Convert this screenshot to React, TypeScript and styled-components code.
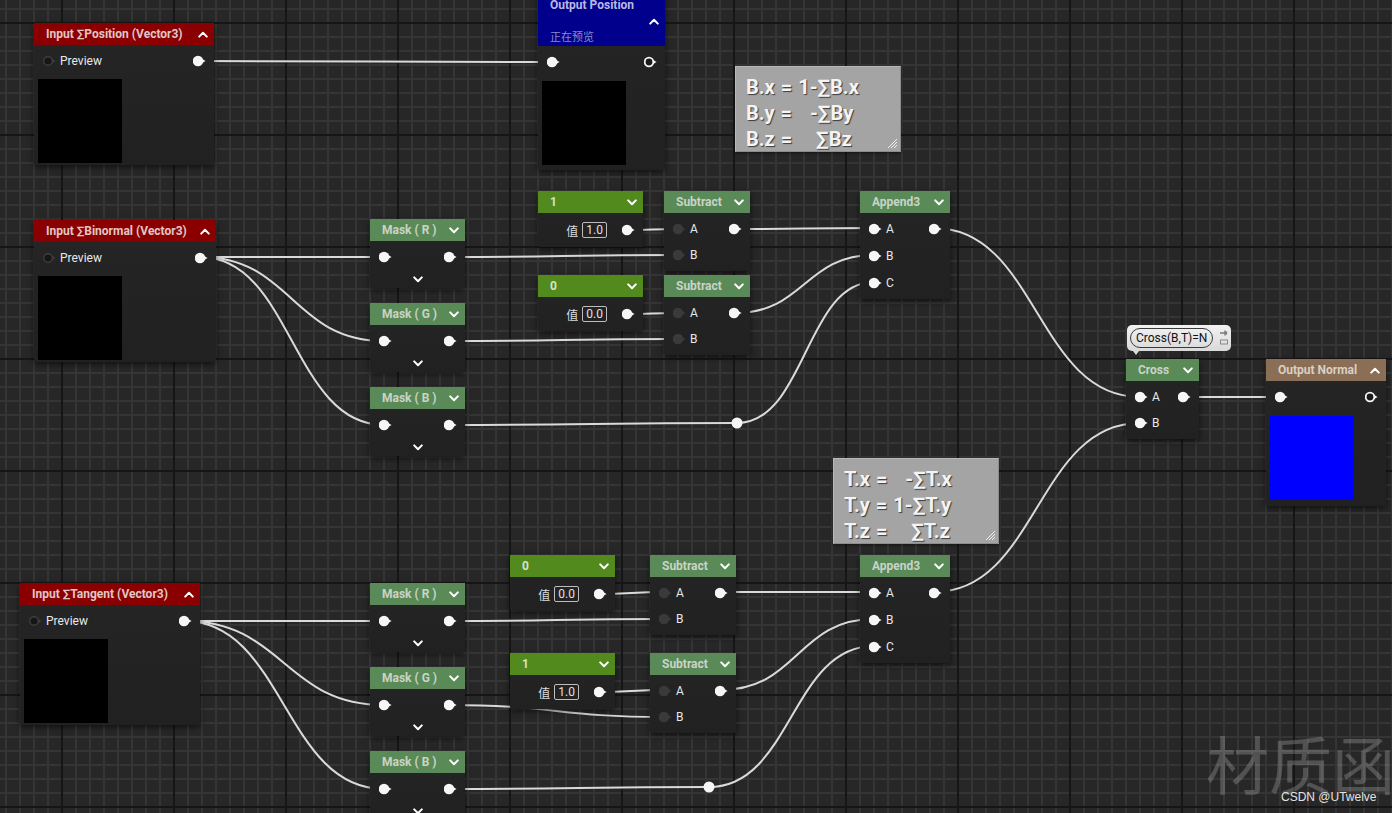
import styled, { createGlobalStyle } from "styled-components";

const colors = {
  canvas: "#272727",
  gridMinor: "#353535",
  gridMajor: "#161616",
  body: "#232323",
  wire: "#dadada",
  pinOn: "#f6f6f6",
  pinOff: "#3a3a3a",
  red: "#8a0000",
  green: "#5a8a57",
  constGreen: "#528a1e",
  blue: "#00008c",
  brown: "#8a6e55",
  comment: "#a4a4a4",
};

const GlobalStyle = createGlobalStyle`
  html, body {
    margin: 0;
    padding: 0;
    background: ${colors.canvas};
    overflow: hidden;
  }
  body {
    font-family: Roboto, "Noto Sans", "Noto Sans CJK SC", sans-serif;
  }
`;

const Canvas = styled.div`
  position: relative;
  width: 1392px;
  height: 813px;
  overflow: hidden;
  background-color: ${colors.canvas};
  background-image:
    linear-gradient(90deg, ${colors.gridMajor} 2px, transparent 2px),
    linear-gradient(180deg, ${colors.gridMajor} 2px, transparent 2px),
    linear-gradient(90deg, ${colors.gridMinor} 2px, transparent 2px),
    linear-gradient(180deg, ${colors.gridMinor} 2px, transparent 2px);
  background-size: 112px 112px, 112px 112px, 14px 14px, 14px 14px;
  background-position: 61px 0, 0 22px, 5px 0, 0 8px;
`;

const WireLayer = styled.svg`
  position: absolute;
  left: 0;
  top: 0;
  width: 1392px;
  height: 813px;
  pointer-events: none;
`;

type Pos = { $x: number; $y: number; $w: number };

const NodeBox = styled.div.attrs<Pos>((p) => ({
  style: { left: p.$x, top: p.$y, width: p.$w },
}))<Pos>`
  position: absolute;
  background: linear-gradient(180deg, #252525 0%, #212121 100%);
  box-shadow: 0 2px 6px rgba(0, 0, 0, 0.6);
  border-radius: 2px;
  font-size: 12px;
  color: #e6e6e6;
`;

const Header = styled.div<{ $bg: string; $fg: string }>`
  height: 22px;
  display: flex;
  align-items: center;
  justify-content: space-between;
  padding: 0 6px 0 12px;
  background: ${(p) => p.$bg};
  color: ${(p) => p.$fg};
  font-size: 12px;
  font-weight: 700;
  white-space: nowrap;
`;

const TallHeader = styled.div`
  height: 52px;
  display: flex;
  flex-direction: column;
  padding: 0 6px 0 12px;
  background: ${colors.blue};
  color: #b9b9e2;
  font-size: 12px;
  font-weight: 700;

  .title {
    height: 22px;
    line-height: 22px;
  }
  .chev {
    height: 10px;
    display: flex;
    justify-content: flex-end;
    align-items: center;
  }
  .sub {
    height: 20px;
    line-height: 20px;
    font-size: 11px;
    font-weight: 400;
    color: #8b8bc4;
    font-family: "Noto Sans CJK SC", sans-serif;
  }
`;

const Body = styled.div<{ $pt?: number; $pb?: number }>`
  padding-top: ${(p) => p.$pt ?? 3}px;
  padding-bottom: ${(p) => p.$pb ?? 3}px;
`;

const PinRow = styled.div<{ $h?: number }>`
  height: ${(p) => p.$h ?? 26}px;
  display: flex;
  align-items: center;
  gap: 3px;
  padding: 0 7px 0 9px;
  font-size: 12px;
  color: #e8e8e8;
`;

const Spacer = styled.div`
  flex: 1;
`;

const Expander = styled.div`
  height: 18px;
  display: flex;
  justify-content: center;
  align-items: center;
`;

const Preview = styled.div<{ $color: string }>`
  width: 84px;
  height: 84px;
  margin: 6px 0 0 4px;
  background: ${(p) => p.$color};
`;

const ValueLabel = styled.span`
  font-family: "Noto Sans CJK SC", sans-serif;
  font-size: 12px;
  color: #dcdcdc;
  margin-right: 1px;
`;

const ValueBox = styled.span`
  height: 16px;
  line-height: 15px;
  padding: 0 3px;
  border: 1px solid #bdbdbd;
  border-radius: 2px;
  box-sizing: border-box;
  font-size: 12px;
  color: #e0e0e0;
  margin-right: 12px;
`;

const PinSvg = styled.svg`
  flex: none;
  display: block;
`;

type PinKind = "on" | "off" | "ring" | "dark";

const Pin = ({ kind = "on" }: { kind?: PinKind }) => {
  const fill =
    kind === "on" ? colors.pinOn : kind === "off" ? colors.pinOff : kind === "ring" ? "#1a1a1a" : "#161616";
  const stroke = kind === "ring" ? colors.pinOn : kind === "dark" ? "#3e3e3e" : "none";
  const nub = kind === "on" ? colors.pinOn : kind === "off" ? colors.pinOff : kind === "ring" ? colors.pinOn : "#3e3e3e";
  const r = kind === "ring" || kind === "dark" ? 4.3 : 5.3;
  return (
    <PinSvg width="14" height="12" viewBox="0 0 14 12">
      <path d="M8.5 3.4 L12.5 6 L8.5 8.6 Z" fill={nub} />
      <circle cx="5" cy="6" r={r} fill={fill} stroke={stroke} strokeWidth={kind === "ring" ? 1.8 : 1.4} />
    </PinSvg>
  );
};

const Chevron = ({ up = false }: { up?: boolean }) => (
  <svg width="10" height="7" viewBox="0 0 10 7">
    <polyline
      points={up ? "1.2,5.6 5,1.8 8.8,5.6" : "1.2,1.4 5,5.2 8.8,1.4"}
      fill="none"
      stroke="#ffffff"
      strokeWidth="2"
      strokeLinecap="round"
      strokeLinejoin="round"
    />
  </svg>
);

const InputNode = ({ x, y, w, title }: { x: number; y: number; w: number; title: string }) => (
  <NodeBox $x={x} $y={y} $w={w}>
    <Header $bg={colors.red} $fg="#e2c6c6">
      <span>{title}</span>
      <Chevron up />
    </Header>
    <Body $pt={4} $pb={2}>
      <PinRow $h={24}>
        <Pin kind="dark" />
        <span>Preview</span>
        <Spacer />
        <Pin />
      </PinRow>
      <Preview $color="#000" />
    </Body>
  </NodeBox>
);

const OutputPositionNode = ({ x, y, w }: { x: number; y: number; w: number }) => (
  <NodeBox $x={x} $y={y} $w={w}>
    <TallHeader>
      <div className="title">Output Position</div>
      <div className="chev">
        <Chevron up />
      </div>
      <div className="sub">正在预览</div>
    </TallHeader>
    <Body $pb={5}>
      <PinRow>
        <Pin />
        <Spacer />
        <Pin kind="ring" />
      </PinRow>
      <Preview $color="#000" />
    </Body>
  </NodeBox>
);

const OutputNormalNode = ({ x, y, w }: { x: number; y: number; w: number }) => (
  <NodeBox $x={x} $y={y} $w={w}>
    <Header $bg={colors.brown} $fg="#dccfc2">
      <span>Output Normal</span>
      <Chevron up />
    </Header>
    <Body $pb={6}>
      <PinRow>
        <Pin />
        <Spacer />
        <Pin kind="ring" />
      </PinRow>
      <Preview $color="#0000ff" />
    </Body>
  </NodeBox>
);

const MaskNode = ({ x, y, channel }: { x: number; y: number; channel: string }) => (
  <NodeBox $x={x} $y={y} $w={95}>
    <Header $bg={colors.green} $fg="#c9d4c7">
      <span>Mask ( {channel} )</span>
      <Chevron />
    </Header>
    <Body $pt={3} $pb={0}>
      <PinRow>
        <Pin />
        <Spacer />
        <Pin />
      </PinRow>
      <Expander>
        <Chevron />
      </Expander>
    </Body>
  </NodeBox>
);

type MathProps = {
  x: number;
  y: number;
  w: number;
  title: string;
  inputs: string[];
  pin: PinKind;
  rowH?: number;
};

const MathNode = ({ x, y, w, title, inputs, pin, rowH = 26 }: MathProps) => (
  <NodeBox $x={x} $y={y} $w={w}>
    <Header $bg={colors.green} $fg="#c9d4c7">
      <span>{title}</span>
      <Chevron />
    </Header>
    <Body $pt={rowH === 27 ? 2 : 3} $pb={3}>
      {inputs.map((name, i) => (
        <PinRow key={name} $h={rowH}>
          <Pin kind={pin} />
          <span>{name}</span>
          <Spacer />
          {i === 0 && <Pin />}
        </PinRow>
      ))}
    </Body>
  </NodeBox>
);

const ConstNode = ({ x, y, title, value }: { x: number; y: number; title: string; value: string }) => (
  <NodeBox $x={x} $y={y} $w={105}>
    <Header $bg={colors.constGreen} $fg="#d6e2cc">
      <span>{title}</span>
      <Chevron />
    </Header>
    <Body $pt={4} $pb={4}>
      <PinRow>
        <Spacer />
        <ValueLabel>值</ValueLabel>
        <ValueBox>{value}</ValueBox>
        <Pin />
      </PinRow>
    </Body>
  </NodeBox>
);

const CommentBox = styled.div.attrs<{ $x: number; $y: number }>((p) => ({
  style: { left: p.$x, top: p.$y },
}))<{ $x: number; $y: number }>`
  position: absolute;
  width: 166px;
  height: 86px;
  box-sizing: border-box;
  padding: 7px 10px 0;
  background: ${colors.comment};
  border: 1px solid #b8b8b8;
  border-right-color: #8c8c8c;
  border-bottom-color: #8c8c8c;
  box-shadow: 0 1px 3px rgba(0, 0, 0, 0.5);
  font-family: Roboto, "DejaVu Sans", sans-serif;
  font-size: 20px;
  font-weight: 700;
  line-height: 26px;
  word-spacing: 1px;
  color: #f4f4f4;
  text-shadow: 1px 1px 1px #3c3c3c;
  white-space: pre;
`;

const Hatch = styled.svg`
  position: absolute;
  right: 2px;
  bottom: 2px;
`;

const Comment = ({ x, y, lines }: { x: number; y: number; lines: string[] }) => (
  <CommentBox $x={x} $y={y}>
    {lines.map((l) => (
      <div key={l}>{l}</div>
    ))}
    <Hatch width="11" height="11" viewBox="0 0 11 11">
      <path d="M1 10 L10 1 M4 10 L10 4 M7 10 L10 7" stroke="#f0f0f0" strokeWidth="1" />
    </Hatch>
  </CommentBox>
);

const Bubble = styled.div`
  position: absolute;
  left: 1127px;
  top: 325px;
  width: 104px;
  height: 26px;
  box-sizing: border-box;
  padding: 0 3px;
  display: flex;
  align-items: center;
  justify-content: space-between;
  background: linear-gradient(180deg, #f2f2f2, #d9d9d9);
  border-radius: 5px;

  &::after {
    content: "";
    position: absolute;
    left: 6px;
    bottom: -4px;
    border-left: 3px solid transparent;
    border-right: 3px solid transparent;
    border-top: 4px solid #dcdcdc;
  }
`;

const BubblePill = styled.span`
  height: 20px;
  line-height: 18px;
  box-sizing: border-box;
  padding: 0 5px;
  border: 1px solid #3a3a3a;
  border-radius: 10px;
  font-size: 12px;
  color: #111;
`;

const Watermark = styled.div`
  position: absolute;
  left: 1206px;
  top: 730px;
  font-family: "Noto Sans CJK SC", sans-serif;
  font-size: 63px;
  line-height: 63px;
  color: rgba(255, 255, 255, 0.2);
  white-space: nowrap;
`;

const Credit = styled.div`
  position: absolute;
  left: 1281px;
  top: 790px;
  font-family: "Liberation Sans", Arial, sans-serif;
  font-size: 12px;
  color: #e4e4e4;
  white-space: nowrap;
`;

const wires: [number, number, number, number][] = [
  [198, 61, 552, 62],
  [200, 257, 384, 257],
  [200, 257, 384, 341],
  [200, 257, 384, 425],
  [448, 257, 678, 255],
  [448, 341, 678, 339],
  [448, 425, 737, 423],
  [737, 423, 874, 282],
  [626, 230, 678, 229],
  [626, 314, 678, 313],
  [735, 229, 874, 228],
  [735, 313, 874, 255],
  [934, 228, 1140, 397],
  [1182, 397, 1280, 397],
  [934, 592, 1140, 423],
  [184, 621, 384, 621],
  [184, 621, 384, 705],
  [184, 621, 384, 789],
  [448, 621, 665, 619],
  [448, 705, 665, 717],
  [448, 789, 709, 787],
  [709, 787, 874, 646],
  [598, 594, 665, 592],
  [598, 692, 665, 690],
  [721, 592, 874, 592],
  [721, 690, 874, 619],
];

const knots: [number, number][] = [
  [737, 423],
  [709, 787],
];

const wirePath = ([x1, y1, x2, y2]: [number, number, number, number]) => {
  const c = Math.max(Math.abs(x2 - x1) * 0.5, 20);
  return `M${x1} ${y1} C${x1 + c} ${y1}, ${x2 - c} ${y2}, ${x2} ${y2}`;
};

const App = () => {
  return (
    <>
      <GlobalStyle />
      <Canvas>
        <WireLayer viewBox="0 0 1392 813">
          {wires.map((w, i) => (
            <path key={i} d={wirePath(w)} fill="none" stroke={colors.wire} strokeWidth="2" />
          ))}
          {knots.map(([x, y], i) => (
            <circle key={i} cx={x} cy={y} r="5.5" fill={colors.pinOn} />
          ))}
        </WireLayer>

        <InputNode x={34} y={23} w={180} title="Input ∑Position (Vector3)" />
        <InputNode x={34} y={220} w={182} title="Input ∑Binormal (Vector3)" />
        <InputNode x={20} y={583} w={180} title="Input ∑Tangent (Vector3)" />

        <OutputPositionNode x={538} y={-6} w={127} />
        <OutputNormalNode x={1266} y={359} w={120} />

        <MaskNode x={370} y={219} channel="R" />
        <MaskNode x={370} y={303} channel="G" />
        <MaskNode x={370} y={387} channel="B" />
        <MaskNode x={370} y={583} channel="R" />
        <MaskNode x={370} y={667} channel="G" />
        <MaskNode x={370} y={751} channel="B" />

        <ConstNode x={538} y={191} title="1" value="1.0" />
        <ConstNode x={538} y={275} title="0" value="0.0" />
        <ConstNode x={510} y={555} title="0" value="0.0" />
        <ConstNode x={510} y={653} title="1" value="1.0" />

        <MathNode x={664} y={191} w={86} title="Subtract" inputs={["A", "B"]} pin="off" />
        <MathNode x={664} y={275} w={86} title="Subtract" inputs={["A", "B"]} pin="off" />
        <MathNode x={650} y={555} w={86} title="Subtract" inputs={["A", "B"]} pin="off" />
        <MathNode x={650} y={653} w={86} title="Subtract" inputs={["A", "B"]} pin="off" />

        <MathNode x={860} y={191} w={90} title="Append3" inputs={["A", "B", "C"]} pin="on" rowH={27} />
        <MathNode x={860} y={555} w={90} title="Append3" inputs={["A", "B", "C"]} pin="on" rowH={27} />

        <MathNode x={1126} y={359} w={73} title="Cross" inputs={["A", "B"]} pin="on" />

        <Bubble>
          <BubblePill>Cross(B,T)=N</BubblePill>
          <svg width="8" height="18" viewBox="0 0 8 18">
            <path d="M0 4 H5 M5 1.5 V6.5 M6.5 2.5 V5.5" stroke="#7a7a7a" strokeWidth="1.4" />
            <rect x="0.5" y="11" width="7" height="4" fill="none" stroke="#8a8a8a" strokeWidth="1" />
          </svg>
        </Bubble>

        <Comment x={735} y={66} lines={["B.x = 1-∑B.x", "B.y =   -∑By", "B.z =    ∑Bz"]} />
        <Comment x={833} y={458} lines={["T.x =   -∑T.x", "T.y = 1-∑T.y", "T.z =    ∑T.z"]} />

        <Watermark>材质函数</Watermark>
        <Credit>CSDN @UTwelve</Credit>
      </Canvas>
    </>
  );
};

export default App;
